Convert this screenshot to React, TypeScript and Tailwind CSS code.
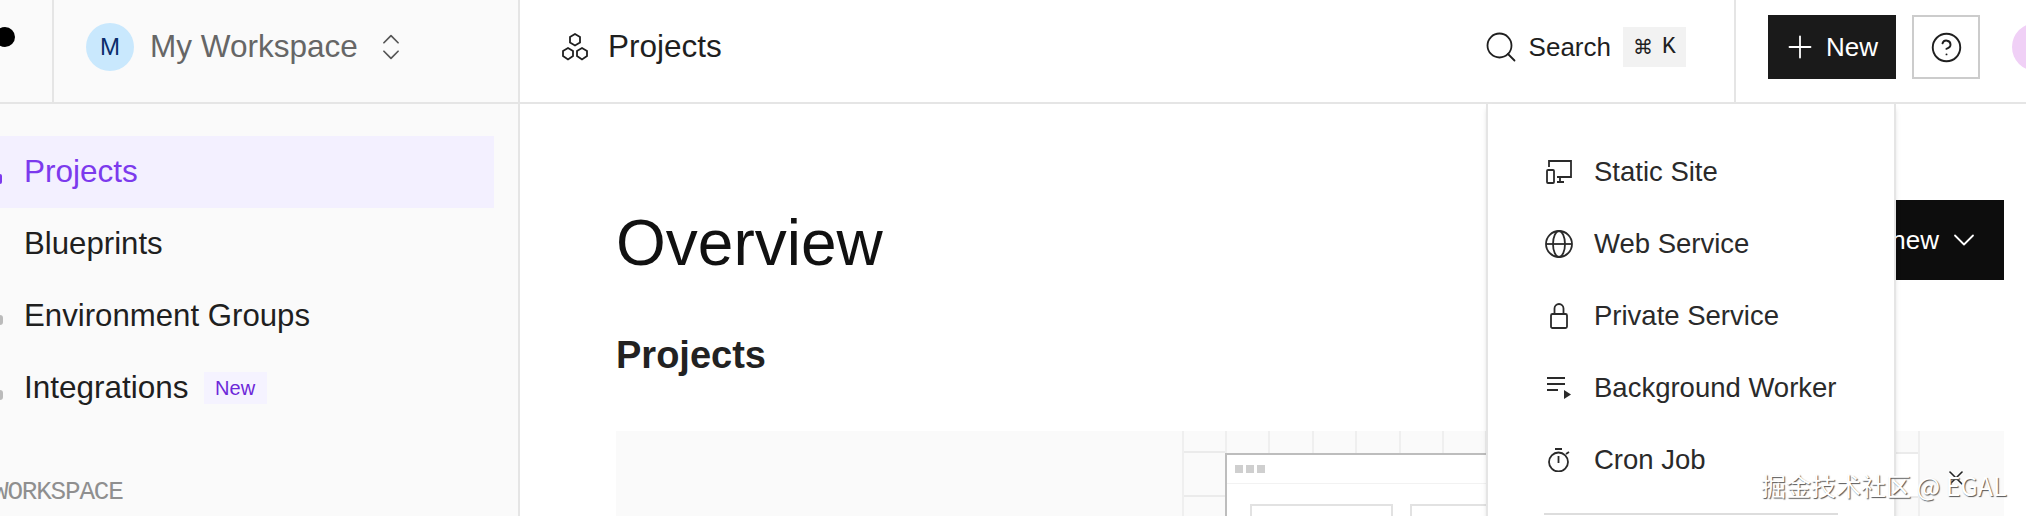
import { ChevronDown, ChevronsUpDown, CircleHelp, Plus, Search, X } from 'lucide-react'

const font = "font-['Liberation_Sans',Arial,sans-serif]"

function HexIcon() {
  return (
    <svg width="30" height="28" viewBox="0 0 30 28" fill="none" stroke="#1f1f1f" strokeWidth="1.8">
      <path d="M15 1l5 2.9v5.7l-5 2.9-5-2.9V3.9z" />
      <path d="M8 15l5 2.9v5.2L8 26.5 3 23.1v-5.2z" />
      <path d="M22 15l5 2.9v5.2l-5 3.4-5-3.4v-5.2z" />
    </svg>
  )
}

function SiteIcon() {
  return (
    <svg width="26" height="24" viewBox="0 0 26 24" fill="none" stroke="#2a2a2a" strokeWidth="1.8">
      <path d="M3 7V1h22v16H11" />
      <rect x="1" y="10" width="7" height="13" rx="1" />
      <path d="M14 17v5M11 22h7" />
    </svg>
  )
}

function GlobeIcon() {
  return (
    <svg width="28" height="28" viewBox="0 0 28 28" fill="none" stroke="#2a2a2a" strokeWidth="1.8">
      <circle cx="14" cy="14" r="13" />
      <ellipse cx="14" cy="14" rx="6" ry="13" />
      <path d="M1 14h26" />
    </svg>
  )
}

function LockIcon() {
  return (
    <svg width="18" height="26" viewBox="0 0 18 26" fill="none" stroke="#2a2a2a" strokeWidth="1.8">
      <rect x="1" y="11" width="16" height="14" rx="1.5" />
      <path d="M4.5 11V5.5a4.5 4.5 0 0 1 9 0V11" />
    </svg>
  )
}

function WorkerIcon() {
  return (
    <svg width="24" height="22" viewBox="0 0 24 22" fill="#2a2a2a" stroke="none">
      <rect x="0" y="0" width="18" height="2" />
      <rect x="0" y="6" width="18" height="2" />
      <rect x="0" y="12" width="11" height="2" />
      <path d="M17 13l7 4.5-7 4.5z" />
    </svg>
  )
}

function TimerIcon() {
  return (
    <svg width="22" height="24" viewBox="0 0 22 24" fill="none" stroke="#2a2a2a" strokeWidth="1.8">
      <circle cx="10.5" cy="14" r="9.5" />
      <path d="M7 1h7M10.5 8v7M18 6l3-2" />
    </svg>
  )
}

const navItems = ['Blueprints', 'Environment Groups']

const menuItems = [
  { label: 'Static Site', icon: <SiteIcon /> },
  { label: 'Web Service', icon: <GlobeIcon /> },
  { label: 'Private Service', icon: <LockIcon /> },
  { label: 'Background Worker', icon: <WorkerIcon /> },
  { label: 'Cron Job', icon: <TimerIcon /> },
]

export default function App() {
  return (
    <div className={`${font} w-[2026px] h-[516px] overflow-hidden bg-white text-[#1f1f1f] relative`}>
      <header className="flex h-[104px] border-b-2 border-[#e5e5e5]">
        <div className="w-[520px] flex bg-[#fafafa] border-r-2 border-[#e5e5e5]">
          <div className="w-[54px] border-r-2 border-[#e5e5e5] flex items-center pb-[28px]">
            <div className="w-5 h-5 bg-black rounded-full ml-[-5px]" />
          </div>
          <div className="flex items-center pl-8 pb-2">
            <div className="w-12 h-12 rounded-full bg-[#c9e8fd] flex items-center justify-center text-[#0b2d6b] text-[24px]">M</div>
            <span className="ml-4 text-[31.5px] text-[#666]">My Workspace</span>
            <ChevronsUpDown className="ml-[16px] text-[#555]" size={34} strokeWidth={1.2} />
          </div>
        </div>
        <div className="flex-1 flex items-center pl-10">
          <div className="pb-2 flex items-center">
            <HexIcon />
            <span className="ml-[18px] text-[31.5px]">Projects</span>
          </div>
          <div className="ml-auto flex items-center pb-2">
            <Search size={36} strokeWidth={1.2} />
            <span className="ml-[10px] text-[26px]">Search</span>
            <span className="ml-3 w-[63px] h-10 bg-[#f2f2f2] flex items-center justify-center gap-[9px] text-[23px]">
              <span className="text-[20px]">⌘</span>
              <span className="font-['Liberation_Mono',monospace]">K</span>
            </span>
          </div>
          <div className="ml-[48px] h-full border-l-2 border-[#e5e5e5] flex items-center pl-8 pb-2">
            <button className="w-32 h-16 bg-[#1a1a1a] text-white flex items-center pl-[14px] gap-2 text-[26px]">
              <Plus size={36} strokeWidth={1.2} />
              New
            </button>
            <button className="ml-4 w-[68px] h-16 border-2 border-[#ccc] flex items-center justify-center">
              <CircleHelp size={33} strokeWidth={1.4} />
            </button>
            <div className="ml-8 mr-[-34px] w-12 h-12 rounded-full bg-[#f0d0f6]" />
          </div>
        </div>
      </header>

      <div className="flex h-[412px]">
        <aside className="w-[520px] bg-[#fafafa] border-r-2 border-[#e5e5e5] pt-8 pr-6 relative">
          {/* clipped nav icons on the left edge */}
          <div className="absolute left-[-2px] top-[70px] w-1 h-[10px] rounded-full bg-[#7c3aed]" />
          <div className="absolute left-[-3px] top-[211px] w-[6px] h-[10px] rounded-full bg-[#bbb]" />
          <div className="absolute left-[-3px] top-[286px] w-[6px] h-[10px] rounded-full bg-[#bbb]" />
          <div className="h-[72px] bg-[#f3f0ff] flex items-center pl-6 text-[31.5px] text-[#7c3aed]">
            Projects
          </div>
          {navItems.map((item) => (
            <div key={item} className="h-[72px] flex items-center pl-6 text-[31.2px]">
              {item}
            </div>
          ))}
          <div className="h-[72px] flex items-center pl-6 text-[31.5px]">
            Integrations
            <span className="ml-[15px] w-[63px] h-8 bg-[#f5f3ff] flex items-center justify-center text-[20px] text-[#6d28d9]">New</span>
          </div>
          <div className="mt-[49px] ml-[-7px] text-[26px] tracking-[-1.2px] whitespace-nowrap text-[#8f8f8f] font-['Liberation_Mono',monospace]">WORKSPACE</div>
        </aside>

        <main className="flex-1 pl-[96px] pr-[22px] pt-[96px]">
          <div className="flex justify-between items-start">
            <h1 className="mt-[3px] text-[64px] leading-[80px] text-[#111]">Overview</h1>
            <button className="w-[250px] h-20 bg-[#0d0d0d] text-white flex items-center justify-end gap-[7px] pr-[22px] text-[26px]">
              Create new
              <ChevronDown size={36} strokeWidth={1.2} />
            </button>
          </div>
          <h2 className="mt-[47px] text-[38px] leading-[50px] font-bold text-[#222]">Projects</h2>
          <div className="mt-[51px] h-[120px] bg-[#fafafa] pl-[566px] flex">
            <div className="w-[43px] border-l-2 border-[#efefef]">
              <div className="h-[22px] border-b-2 border-[#ebebeb]" />
              <div className="h-[44px] border-b-2 border-[#ebebeb]" />
            </div>
            <div className="w-[669px] flex flex-col">
              <div className="h-[22px] flex">
                {[0, 1, 2, 3, 4, 5, 6].map((i) => (
                  <div key={i} className="w-[43.4px] border-l-2 border-[#efefef]" />
                ))}
              </div>
              <div className="flex-1 bg-white border-t-2 border-l-2 border-[#bdbdbd]">
                <div className="h-[29px] border-b border-[#f2f2f2] flex items-center gap-[3px] pl-[8px]">
                  <div className="w-2 h-2 bg-[#cfcfcf]" />
                  <div className="w-2 h-2 bg-[#cfcfcf]" />
                  <div className="w-2 h-2 bg-[#cfcfcf]" />
                </div>
                <div className="flex gap-[17px] pl-[23px] pt-[20px]">
                  <div className="w-[143px] h-10 border-2 border-[#e2e2e2]" />
                  <div className="w-[143px] h-10 border-2 border-[#e2e2e2]" />
                </div>
              </div>
            </div>
            <div className="w-[26px] border-r-2 border-[#efefef]">
              <div className="h-[23px] border-b-2 border-[#ebebeb]" />
              <div className="h-[44px] bg-white border-b-2 border-[#ebebeb]" />
            </div>
          </div>
        </main>
      </div>

      {/* dropdown under the New button */}
      <div className="absolute left-[1486px] top-[104px] w-[410px] h-[420px] bg-white border-x-2 border-[#e5e5e5] shadow-md pl-[56px] pr-[56px] pt-8">
        {menuItems.map((item) => (
          <div key={item.label} className="h-[72px] flex items-center">
            <div className="w-[30px] mr-[20px] flex justify-center">{item.icon}</div>
            <span className="text-[27.5px] text-[#2a2a2a]">{item.label}</span>
          </div>
        ))}
        <div className="mt-[17px] border-t-2 border-[#ddd]" />
      </div>

      <X className="absolute left-[1944px] top-[466px] text-[#222]" size={24} strokeWidth={1.6} />
      {/* image watermark */}
      <div className="absolute left-[1761px] top-[470px] text-[25px] leading-[30px] text-white font-['Noto_Sans_CJK_SC',sans-serif] [text-shadow:1px_1px_1px_#555]">
        掘金技术社区 @ EGAL
      </div>
    </div>
  )
}
